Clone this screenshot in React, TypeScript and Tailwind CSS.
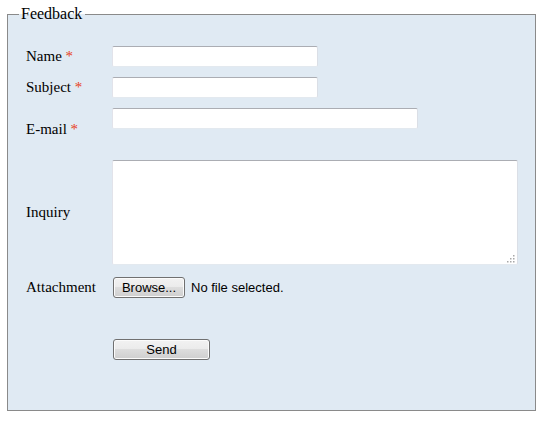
import type { ReactNode } from "react";

const serif = "font-['Liberation_Serif','Times_New_Roman',serif]";
const sans = "font-['Liberation_Sans',Arial,sans-serif]";

const inputCls =
  "block h-[21px] bg-white border border-[#e2e3ea] border-t-[#abadb3] border-b-[#e3e9ef] border-r-[#dbdfe6] rounded-[2px] px-[2px] text-[13px] outline-none " +
  sans;

const buttonCls =
  "h-[21px] ml-[1px] border border-[#707070] rounded-[3px] bg-[linear-gradient(to_bottom,#f2f2f2_0%,#ebebeb_50%,#dddddd_50%,#cfcfcf_100%)] shadow-[inset_0_0_0_1px_#fbfbfb] text-[13px] leading-none text-black " +
  sans;

function Label({ children, required }: { children: ReactNode; required?: boolean }) {
  return (
    <div className={`w-[86px] shrink-0 text-[15px] leading-[17px] text-black ${serif}`}>
      {children}
      {required && <span className="text-[#e8401a]"> *</span>}
    </div>
  );
}

function Row({ label, required, children, className = "" }: { label: string; required?: boolean; children: ReactNode; className?: string }) {
  return (
    <div className={`flex items-center ${className}`}>
      <Label required={required}>{label}</Label>
      <div>{children}</div>
    </div>
  );
}

function Grip() {
  const dots = [
    [6, 0],
    [3, 3],
    [6, 3],
    [0, 6],
    [3, 6],
    [6, 6],
  ];
  return (
    <svg className="absolute right-[3px] bottom-[2px]" width="8" height="8" viewBox="0 0 8 8">
      {dots.map(([x, y], i) => (
        <rect key={i} x={x} y={y} width="1.5" height="1.5" fill="#a8a8a8" />
      ))}
    </svg>
  );
}

export default function App() {
  return (
    <div className="min-h-screen bg-white pt-[5px] pl-[7px]">
      <fieldset className="w-[529px] border border-[#8a8a8a] bg-[#e0eaf3] pb-[50px]">
        <legend className={`ml-[11px] pl-[2px] pr-[3px] text-[16px] leading-[18px] text-black ${serif}`}>
          Feedback
        </legend>
        <div className="flex flex-col pt-[23px] pl-[18px]">
          <Row label="Name" required>
            <input className={`${inputCls} w-[206px]`} />
          </Row>
          <Row label="Subject" required className="mt-[10px]">
            <input className={`${inputCls} w-[206px]`} />
          </Row>
          <Row label="E-mail" required className="mt-[10px]">
            <input className={`${inputCls} w-[306px]`} />
            <div className="h-[21px]" />
          </Row>
          <Row label="Inquiry" className="mt-[10px]">
            <div className="relative">
              <textarea className={`${inputCls} w-[406px] h-[105px] resize-none`} />
              <Grip />
            </div>
          </Row>
          <Row label="Attachment" className="mt-[12px]">
            <div className="flex items-center">
              <button className={`${buttonCls} w-[72px]`}>Browse...</button>
              <span className={`ml-[6px] text-[13px] text-black ${sans}`}>No file selected.</span>
            </div>
          </Row>
          <div className="flex mt-[41px]">
            <div className="w-[86px] shrink-0" />
            <button className={`${buttonCls} w-[97px]`}>Send</button>
          </div>
        </div>
      </fieldset>
    </div>
  );
}
